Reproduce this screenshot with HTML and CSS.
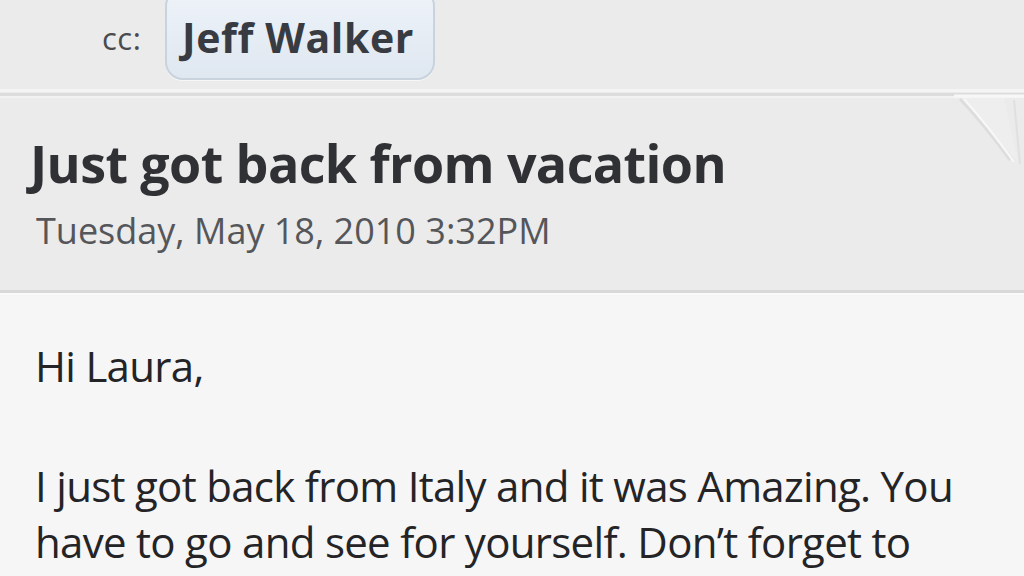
FILE: index.html
```html
<!DOCTYPE html>
<html>
<head>
<meta charset="utf-8">
<link rel="stylesheet" href="styles.css">
</head>
<body>
<div class="screen">
  <div class="cc-row">
    <span class="cc-label">cc:</span>
    <span class="chip">Jeff Walker</span>
  </div>
  <div class="divider"></div>
  <div class="subject">
    <h1 class="title">Just got back from vacation</h1>
    <div class="date">Tuesday, May 18, 2010 3:32PM</div>
  </div>
  <div class="divider-bottom"></div>
  <div class="message">
    <p class="para">Hi Laura,</p>
    <p class="para">I just got back from Italy and it was Amazing. You have to go and see for yourself. Don’t forget to</p>
  </div>
  <svg class="fold" width="70" height="80" viewBox="0 0 70 80">
    <path d="M6 14 L50 14 L64 78" fill="#eeeeee"/>
    <path d="M6 15 Q30 40 56 76" stroke="#dddddd" stroke-width="3" fill="none"/>
    <path d="M10 15 Q34 42 60 78" stroke="#f8f8f8" stroke-width="2" fill="none"/>
    <path d="M0 12 L70 12" stroke="#f7f7f7" stroke-width="3"/>
    <path d="M60 16 L66 80" stroke="#e0e0e0" stroke-width="2"/>
  </svg>
</div>
</body>
</html>
```
FILE: styles.css
```css
html, body {
  margin: 0;
  padding: 0;
}
body {
  width: 1024px;
  height: 576px;
  overflow: hidden;
  background: #f6f6f6;
  font-family: "Open Sans", "Noto Sans", sans-serif;
}
.screen {
  position: relative;
  width: 1024px;
  height: 576px;
  overflow: hidden;
}
.cc-row {
  height: 88px;
  background: #ebebeb;
  display: flex;
  align-items: flex-start;
  padding-left: 102px;
  box-sizing: border-box;
}
.cc-label {
  font-size: 31px;
  line-height: 40px;
  color: #4a4b4f;
  margin-top: 18px;
  width: 63px;
  letter-spacing: 0.5px;
}
.chip {
  margin-top: -12px;
  height: 92px;
  box-sizing: border-box;
  padding: 27px 0 0 15px;
  width: 270px;
  border: 2px solid #c9d3de;
  border-radius: 18px;
  background: linear-gradient(#eef3f9, #dfe7f0);
  box-shadow: 0 1px 0 #f6f6f6;
  font-weight: 700;
  font-size: 41px;
  line-height: 40px;
  color: #383b42;
  letter-spacing: 0.6px;
}
.divider {
  height: 12px;
  background: linear-gradient(#ebebeb 0, #ebebeb 1px, #f4f4f4 1px, #f4f4f4 4px, #ebebeb 4px, #ebebeb 5px, #dcdcdc 5px, #dcdcdc 8px, #f2f2f2 8px, #f2f2f2 10px, #ebebeb 10px);
}
.subject {
  background: #ebebeb;
  height: 190px;
  box-sizing: border-box;
  padding: 35px 0 0 30px;
}
.title {
  margin: 0;
  font-size: 52px;
  line-height: 56px;
  font-weight: 700;
  color: #303135;
  letter-spacing: -0.6px;
}
.date {
  margin-top: 20px;
  font-size: 36px;
  line-height: 40px;
  color: #55565a;
  letter-spacing: 0;
  padding-left: 6px;
}
.divider-bottom {
  height: 6px;
  background: linear-gradient(#d9d9d9 0, #d9d9d9 3px, #fafafa 3px, #fafafa 5px, #f4f4f4 5px);
}
.message {
  padding: 42px 20px 0 35px;
  color: #242426;
}
.para {
  margin: 0 0 64px 0;
  font-size: 42px;
  line-height: 56px;
  font-weight: 500;
  letter-spacing: -0.7px;
}
.fold {
  position: absolute;
  right: 0;
  top: 84px;
}
```
